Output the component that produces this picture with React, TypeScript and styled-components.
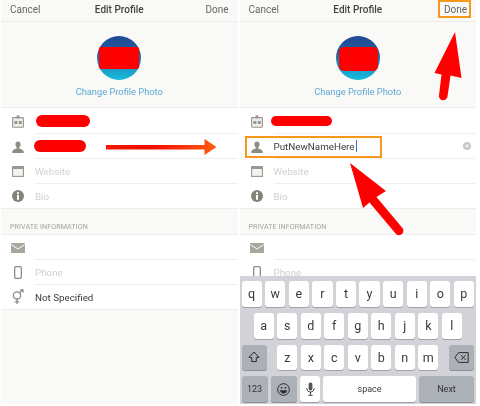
import React from 'react';
import styled, { createGlobalStyle } from 'styled-components';

const GlobalStyle = createGlobalStyle`
  html, body {
    margin: 0;
    padding: 0;
    background: #fff;
  }
  *, *::before, *::after { box-sizing: border-box; }
`;

const ORANGE = '#f7981d';
const RED = '#fe0000';

const IdIcon = () => (
  <svg width="12" height="13" viewBox="0 0 12 13">
    <rect x="0.6" y="2.6" width="10.8" height="9.6" rx="0.8" fill="#efedea" stroke="#9a9790" strokeWidth="1.1" />
    <rect x="4.6" y="0.4" width="2.8" height="3" fill="#9a9790" />
    <rect x="2.4" y="6" width="3" height="3" fill="#9a9790" />
    <rect x="6.8" y="6" width="3" height="3" fill="#9a9790" />
  </svg>
);

const PersonIcon = () => (
  <svg width="12" height="12" viewBox="0 0 12 12">
    <path d="M6 0.4c1.6 0 2.6 1.2 2.6 2.9 0 1.3-.6 2.4-1.3 3v1.1c1.5.6 4.2 1.2 4.4 3.1V12H.3v-1.5c.2-1.9 2.9-2.5 4.4-3.1V6.3c-.7-.6-1.3-1.7-1.3-3C3.4 1.6 4.4.4 6 .4z" fill="#8f8c85" />
  </svg>
);

const BrowserIcon = () => (
  <svg width="12" height="11" viewBox="0 0 12 11">
    <rect x="0.6" y="0.6" width="10.8" height="9.8" fill="#f4f3f0" stroke="#9a9790" strokeWidth="1.1" />
    <rect x="0.6" y="0.6" width="10.8" height="2.4" fill="#9a9790" />
  </svg>
);

const InfoIcon = () => (
  <svg width="12" height="12" viewBox="0 0 12 12">
    <circle cx="6" cy="6" r="6" fill="#85827b" />
    <circle cx="6" cy="3.2" r="1.1" fill="#fff" />
    <rect x="5" y="5" width="2" height="4.8" fill="#fff" />
  </svg>
);

const MailIcon = () => (
  <svg width="14" height="10" viewBox="0 0 14 10">
    <rect width="14" height="10" rx="0.6" fill="#a9a69e" />
    <path d="M0.4 1.6 7 6l6.6-4.4" fill="none" stroke="#fff" strokeWidth="1" />
  </svg>
);

const PhoneIcon = () => (
  <svg width="8" height="13" viewBox="0 0 8 13">
    <rect x="0.7" y="0.7" width="6.6" height="11.6" rx="1.2" fill="#fff" stroke="#8f8c85" strokeWidth="1.3" />
  </svg>
);

const GenderIcon = () => (
  <svg width="12" height="16" viewBox="0 0 12 16">
    <g fill="none" stroke="#8f8c85" strokeWidth="1.3">
      <circle cx="5" cy="6.4" r="3.6" />
      <path d="M5 10v5M2.8 12.8h4.4M7.6 3.8 11 0.8M8.2 0.8H11v2.6" />
    </g>
  </svg>
);

const ClearIcon = () => (
  <svg width="8" height="8" viewBox="0 0 8 8">
    <circle cx="4" cy="4" r="4" fill="#c9c8c5" />
    <path d="M2.5 2.5l3 3M5.5 2.5l-3 3" stroke="#fff" strokeWidth="0.9" />
  </svg>
);

const ShiftIcon = () => (
  <svg width="12" height="12" viewBox="0 0 12 12">
    <path d="M6 1 11 6.4H8.3V10.6H3.7V6.4H1z" fill="none" stroke="#2c2c2e" strokeWidth="1" strokeLinejoin="round" />
  </svg>
);

const BackspaceIcon = () => (
  <svg width="15" height="11" viewBox="0 0 15 11">
    <path d="M4.6 0.6H14.2V10.4H4.6L0.8 5.5z" fill="none" stroke="#2c2c2e" strokeWidth="1" strokeLinejoin="round" />
    <path d="M7 3.2l4.6 4.6M11.6 3.2 7 7.8" stroke="#2c2c2e" strokeWidth="1" />
  </svg>
);

const EmojiIcon = () => (
  <svg width="13" height="13" viewBox="0 0 13 13">
    <circle cx="6.5" cy="6.5" r="5.8" fill="none" stroke="#2c2c2e" strokeWidth="1" />
    <circle cx="4.6" cy="4.8" r="0.9" fill="#2c2c2e" />
    <circle cx="8.4" cy="4.8" r="0.9" fill="#2c2c2e" />
    <path d="M2.8 7.2h7.4c-.3 2-1.8 3.2-3.7 3.2S3.1 9.2 2.8 7.2z" fill="#2c2c2e" />
  </svg>
);

const MicIcon = () => (
  <svg width="9" height="14" viewBox="0 0 9 14">
    <rect x="2.6" y="0.5" width="3.8" height="8" rx="1.9" fill="#55555a" />
    <path d="M0.8 6.2c0 2.4 1.6 3.8 3.7 3.8s3.700-1.400 3.700-3.800M4.500 10v3M2.400 13.300h4.200" fill="none" stroke="#2c2c2e" strokeWidth="0.9" />
  </svg>
);

const Header = ({ highlightDone }: { highlightDone?: boolean }) => (
  <Nav>
    <NavLink>Cancel</NavLink>
    <NavTitle>Edit Profile</NavTitle>
    <DoneLink $highlight={highlightDone}>Done</DoneLink>
  </Nav>
);

const AvatarBlock = ({ wide }: { wide?: boolean }) => (
  <AvatarArea>
    <Avatar>
      <AvatarMask $wide={wide} />
    </Avatar>
    <ChangePhoto>Change Profile Photo</ChangePhoto>
  </AvatarArea>
);

const Screen = ({ editing }: { editing?: boolean }) => (
  <Phone>
    <Header highlightDone={editing} />
    <AvatarBlock wide={editing} />
    <PublicSection>
      <Row>
        <IconCell><IdIcon /></IconCell>
        <Field>
          <RedactedName $width={editing ? 61 : 54} $shift={editing ? -3 : 1} $height={editing ? 10 : 12} />
        </Field>
      </Row>
      <Row>
        <IconCell><PersonIcon /></IconCell>
        <Field>
          {editing ? (
            <>
              <Value>PutNewNameHere</Value>
              <Caret />
              <ClearSlot><ClearIcon /></ClearSlot>
            </>
          ) : (
            <RedactedName $width={52} $shift={-1} $height={12} />
          )}
        </Field>
        {editing && <NameHighlight />}
      </Row>
      <Row>
        <IconCell><BrowserIcon /></IconCell>
        <Field><Placeholder>Website</Placeholder></Field>
      </Row>
      <Row $last>
        <IconCell><InfoIcon /></IconCell>
        <Field $last><Placeholder>Bio</Placeholder></Field>
      </Row>
    </PublicSection>
    <SectionLabel>PRIVATE INFORMATION</SectionLabel>
    <PrivateSection>
      <Row>
        <IconCell><MailIcon /></IconCell>
        <Field />
      </Row>
      <Row>
        <IconCell><PhoneIcon /></IconCell>
        <Field><Placeholder>Phone</Placeholder></Field>
      </Row>
      {/* the keyboard covers this row on the editing screen */}
      {!editing && (
        <Row $last>
          <IconCell><GenderIcon /></IconCell>
          <Field $last><Value>Not Specified</Value></Field>
        </Row>
      )}
    </PrivateSection>
    {editing && <Keys />}
  </Phone>
);

const Keys = () => (
  <Keyboard>
    <KeyRow>
      {'qwertyuiop'.split('').map((k) => <Key key={k}>{k}</Key>)}
    </KeyRow>
    <KeyRow $inset>
      {'asdfghjkl'.split('').map((k) => <Key key={k}>{k}</Key>)}
    </KeyRow>
    <KeyRow>
      <FnKey $width={25}><ShiftIcon /></FnKey>
      <MiddleKeys>
        {'zxcvbnm'.split('').map((k) => <Key key={k}>{k}</Key>)}
      </MiddleKeys>
      <FnKey $width={25}><BackspaceIcon /></FnKey>
    </KeyRow>
    <KeyRow>
      <FnKey $width={26}>123</FnKey>
      <FnKey $width={26}><EmojiIcon /></FnKey>
      <Key $grow={0}><MicIcon /></Key>
      <SpaceKey>space</SpaceKey>
      <FnKey $width={55}>Next</FnKey>
    </KeyRow>
  </Keyboard>
);

const App: React.FC = () => (
  <>
    <GlobalStyle />
    <Page>
      <Screen />
      <Screen editing />
      <Overlay width="480" height="406" viewBox="0 0 480 406">
        <defs>
          <linearGradient id="sweep" x1="106" x2="216" y1="0" y2="0" gradientUnits="userSpaceOnUse">
            <stop offset="0" stopColor="#f01a00" />
            <stop offset="0.4" stopColor="#f20a00" />
            <stop offset="1" stopColor="#ff5a10" />
          </linearGradient>
        </defs>
        <path d="M106 145H204.500V139L216.500 147L204.500 155V149.500H106z" fill="url(#sweep)" />
        <path d="M455 32 461.500 78 450.500 75.500 447.500 96.500 A4.200 4.200 0 0 1 439 95.500L441.500 74.500 434.500 73z" fill={RED} />
        <path d="M350 163 386 191 376.500 197 402 227.500 A4.200 4.200 0 0 1 396 234L369.500 202.500 363 208z" fill={RED} />
      </Overlay>
    </Page>
  </>
);

export default App;

const Page = styled.div`
  position: relative;
  display: flex;
  gap: 2px;
  width: 480px;
  height: 406px;
  padding: 0 4px 2px 1px;
  font-family: Roboto, "Liberation Sans", sans-serif;
`;

const Overlay = styled.svg`
  position: absolute;
  left: 0;
  top: 0;
  pointer-events: none;
  filter: blur(0.35px);
`;

const Phone = styled.div`
  position: relative;
  flex: 1;
  min-width: 0;
  background: #f9f9f7;
  overflow: hidden;
  filter: blur(0.35px);
`;

const Nav = styled.div`
  display: grid;
  grid-template-columns: 1fr auto 1fr;
  align-items: center;
  height: 22px;
  padding: 0 9px 2px;
  border-bottom: 1px solid #ecebe8;
  font-size: 10px;
`;

const NavLink = styled.span`
  color: #666664;
`;

const NavTitle = styled.span`
  color: #444442;
  font-weight: 500;
`;

const DoneLink = styled.span<{ $highlight?: boolean }>`
  position: relative;
  justify-self: end;
  color: #666664;

  ${(p) => p.$highlight && `
    &::after {
      content: '';
      position: absolute;
      left: -6px;
      right: -4px;
      top: -4px;
      height: 18px;
      border: 2px solid ${ORANGE};
    }
  `}
`;

const AvatarArea = styled.div`
  display: flex;
  flex-direction: column;
  align-items: center;
  height: 85px;
  padding-top: 14px;
`;

const Avatar = styled.div`
  position: relative;
  width: 44px;
  height: 44px;
  border-radius: 50%;
  background: linear-gradient(180deg, #1f4795 0%, #27619f 40%, #1c9cc8 75%, #16bcdc 100%);
`;

const AvatarMask = styled.div<{ $wide?: boolean }>`
  position: absolute;
  left: ${(p) => (p.$wide ? '3px' : '2px')};
  top: 11px;
  width: ${(p) => (p.$wide ? '39px' : '40px')};
  height: ${(p) => (p.$wide ? '24px' : '22px')};
  border-radius: ${(p) => (p.$wide ? '5px' : '2px')};
  background: ${RED};
`;

const ChangePhoto = styled.div`
  margin-top: 6px;
  font-size: 9.3px;
  color: #5da9d3;
`;

const PublicSection = styled.div`
  background: #fff;
  padding-top: 1px;
  border-top: 1px solid #eeedea;
  border-bottom: 1px solid #eeedea;
`;

const PrivateSection = styled.div`
  min-height: 76px;
  background: #fff;
  border-top: 1px solid #eeedea;
  border-bottom: 1px solid #eeedea;
`;

const SectionLabel = styled.div`
  display: flex;
  align-items: flex-end;
  height: 25px;
  padding: 0 0 3px 9px;
  font-size: 7.1px;
  letter-spacing: 0.1px;
  color: #a3a3a0;
`;

const Row = styled.div<{ $last?: boolean }>`
  position: relative;
  display: flex;
  align-items: stretch;
  height: ${(p) => (p.$last ? '24px' : '25px')};
`;

const IconCell = styled.div`
  display: flex;
  align-items: center;
  justify-content: center;
  flex: 0 0 34px;
`;

const Field = styled.div<{ $last?: boolean }>`
  flex: 1;
  display: flex;
  align-items: center;
  border-bottom: ${(p) => (p.$last ? 'none' : '1px solid #f0efed')};
`;

const Value = styled.span`
  font-size: 9.8px;
  color: #3c3c3a;
`;

const Placeholder = styled.span`
  font-size: 9.8px;
  color: #cfcfcd;
`;

const RedactedName = styled.div<{ $width: number; $height: number; $shift: number }>`
  width: ${(p) => p.$width}px;
  height: ${(p) => p.$height}px;
  margin-left: ${(p) => p.$shift}px;
  border-radius: 6px;
  background: ${RED};
`;

const Caret = styled.span`
  width: 1px;
  height: 12px;
  margin-left: 1px;
  background: #3f6fd0;
`;

const ClearSlot = styled.span`
  display: flex;
  margin-left: auto;
  margin-right: 5px;
`;

const NameHighlight = styled.div`
  position: absolute;
  left: 5px;
  top: 2px;
  width: 137px;
  height: 22px;
  border: 2px solid ${ORANGE};
`;

const Keyboard = styled.div`
  position: absolute;
  left: 0;
  right: 0;
  bottom: 0;
  display: flex;
  flex-direction: column;
  gap: 6px;
  height: 128px;
  padding: 5px 2px 2px;
  background: #d1d3d8;
`;

const KeyRow = styled.div<{ $inset?: boolean }>`
  display: flex;
  justify-content: space-between;
  gap: 3.3px;
  height: 26px;
  padding: 0 ${(p) => (p.$inset ? '12px' : '0')};
`;

const MiddleKeys = styled.div`
  display: flex;
  gap: 3.4px;
  width: 161px;
`;

const Key = styled.div<{ $grow?: number }>`
  flex: ${(p) => (p.$grow === 0 ? '0 0 20px' : '1')};
  display: flex;
  align-items: center;
  justify-content: center;
  border-radius: 3px;
  background: #fff;
  box-shadow: 0 1px 0 #9fa1a6;
  font-size: 12.5px;
  color: #3a3a3c;
`;

const FnKey = styled.div<{ $width: number }>`
  flex: 0 0 ${(p) => p.$width}px;
  display: flex;
  align-items: center;
  justify-content: center;
  border-radius: 3px;
  background: #acb1b8;
  box-shadow: 0 1px 0 #8e9095;
  font-size: 9px;
  color: #333335;
`;

const SpaceKey = styled.div`
  flex: 1;
  display: flex;
  align-items: center;
  justify-content: center;
  border-radius: 3px;
  background: #fff;
  box-shadow: 0 1px 0 #9fa1a6;
  font-size: 9px;
  color: #3a3a3c;
`;
